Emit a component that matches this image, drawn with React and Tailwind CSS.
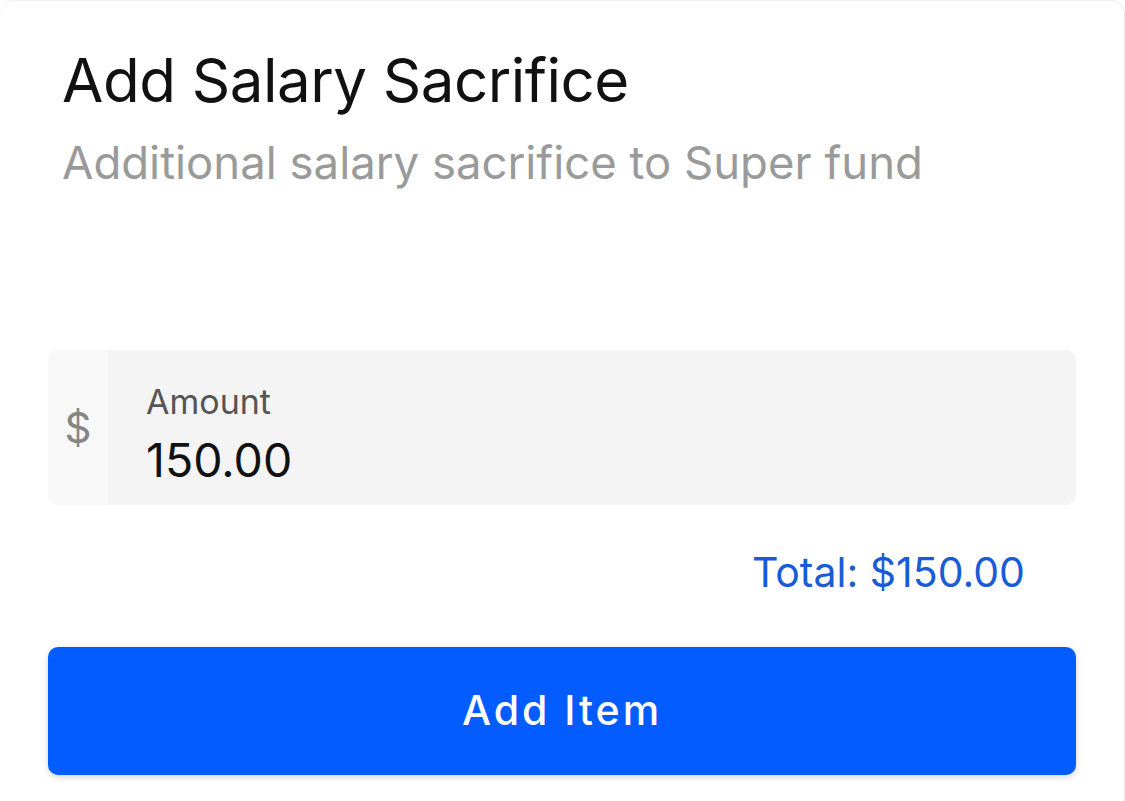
export default function App() {
  return (
    <div className="min-h-screen bg-white" style={{ fontFamily: 'Inter, "Noto Sans", sans-serif' }}>
      <div className="h-[801px] rounded-t-[14px] border-t border-r border-[#f0f0f0] bg-white px-[48px]">
        <div className="px-[14px] pt-[44px]">
          <div className="text-[60px] leading-[70px] font-normal tracking-[-0.5px] text-[#111]">Add Salary Sacrifice</div>
          <div className="mt-[20px] text-[45.5px] leading-[56px] text-[#9a9a9a]">Additional salary sacrifice to Super fund</div>
        </div>

        <div className="mt-[159px] flex h-[155px] overflow-hidden rounded-[10px] bg-[#f4f4f4]">
          <div className="flex w-[60px] items-center justify-center bg-[#f8f8f8] text-[42px] text-[#858585]">$</div>
          <div className="flex flex-col justify-center pl-[38px] pt-[12px]">
            <div className="text-[34px] leading-[40px] text-[#555]">Amount</div>
            <div className="mt-[12px] text-[46.5px] leading-[52px] text-[#111]">150.00</div>
          </div>
        </div>

        <div className="mt-[40px] pr-[51px] text-right text-[41px] leading-[54px] text-[#1a5bd6]">Total: $150.00</div>

        <button className="mt-[48px] flex h-[128px] w-full items-center justify-center rounded-[10px] bg-[#025cff] text-[41px] font-medium tracking-[3px] text-white shadow-[0_2px_6px_rgba(0,0,0,0.18)]">
          Add Item
        </button>
      </div>
    </div>
  )
}
